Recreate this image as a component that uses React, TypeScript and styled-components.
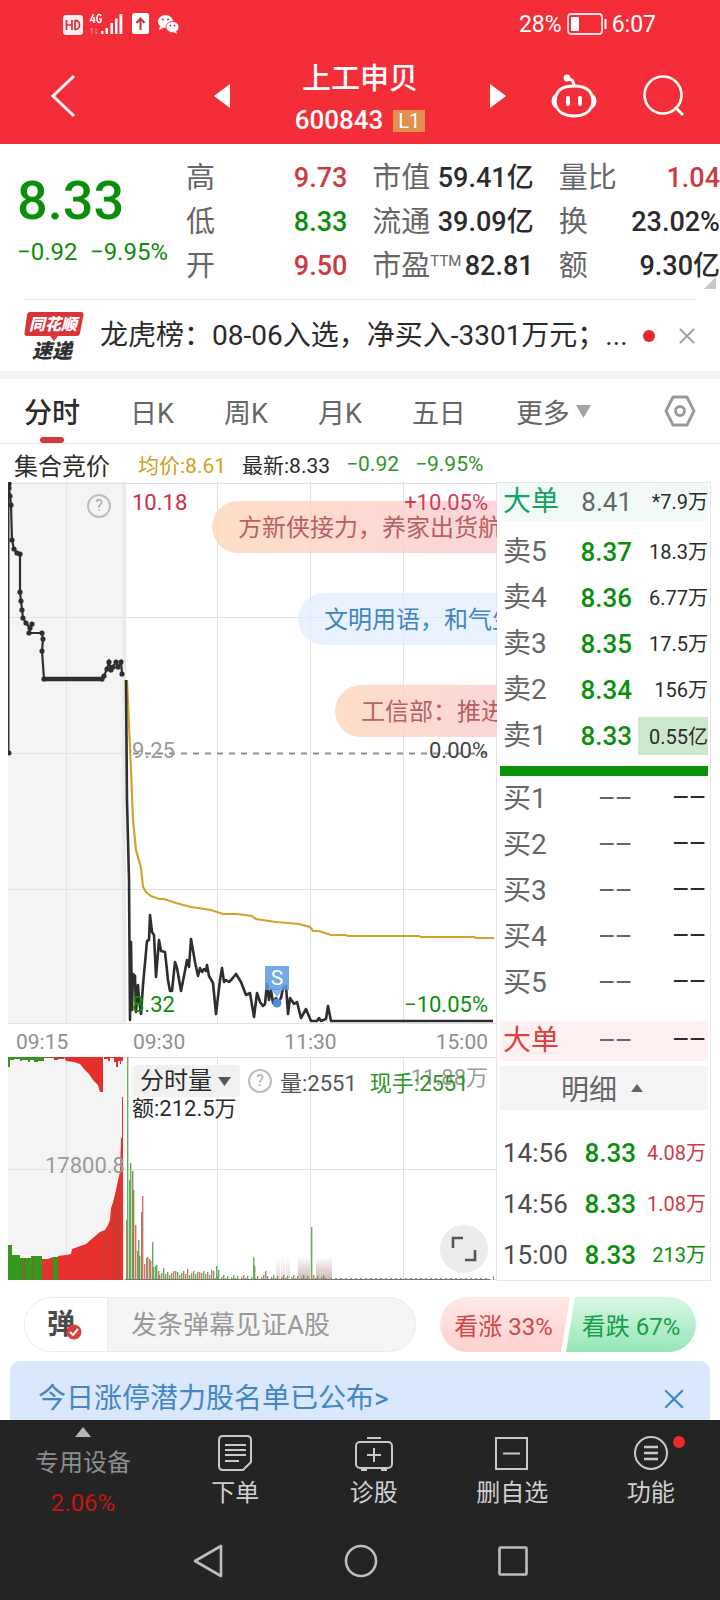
import React from 'react';
import styled, { createGlobalStyle, css } from 'styled-components';

const RED = '#cf3a3f';
const GREEN = '#0b8f0b';
const INK = '#2b2b2b';
const GREY = '#666666';
const LINE = '#e6e6e6';

const GlobalStyle = createGlobalStyle`
  * { box-sizing: border-box; }
  body {
    margin: 0;
    background: #fff;
    color: ${INK};
    font-family: Roboto, "Noto Sans CJK SC", sans-serif;
  }
  button, input {
    font: inherit;
    color: inherit;
    border: 0;
    padding: 0;
    margin: 0;
    background: none;
  }
  svg { display: block; flex: none; }
`;

/* ---------- header ---------- */

const Header = styled.header`
  background: #f32e38;
  color: #fff;
`;

const StatusBar = styled.div`
  display: flex;
  align-items: center;
  justify-content: space-between;
  height: 48px;
  padding: 0 64px 0 62px;
  font-size: 23px;
`;

const StatusGroup = styled.div<{ $gap: number }>`
  display: flex;
  align-items: center;
  gap: ${(p) => p.$gap}px;
`;

const TitleBar = styled.div`
  display: grid;
  grid-template-columns: minmax(0, 1fr) 292px minmax(0, 1fr);
  align-items: center;
  height: 96px;
`;

const TitleSide = styled.div<{ $end?: boolean }>`
  display: flex;
  align-items: center;
  gap: 46px;
  padding: ${(p) => (p.$end ? '0 35px 0 0' : '0 0 0 50px')};
  justify-content: ${(p) => (p.$end ? 'flex-end' : 'flex-start')};
`;

const TitleCenter = styled.div`
  display: flex;
  align-items: center;
  justify-content: space-between;
`;

const TitleText = styled.div`
  padding-top: 8px;
  text-align: center;
`;

const StockName = styled.h1`
  margin: 0;
  font-size: 29px;
  font-weight: 500;
  line-height: 41px;
`;

const StockCode = styled.div`
  display: flex;
  align-items: center;
  gap: 10px;
  font-size: 26px;
  font-weight: 500;
  line-height: 41px;
`;

const LevelTag = styled.span`
  width: 32px;
  height: 22px;
  background: #e2904e;
  font-size: 20px;
  font-weight: 400;
  line-height: 22px;
  text-align: center;
`;

const IconButton = styled.button`
  display: flex;
  align-items: center;
  justify-content: center;
  cursor: pointer;
`;

/* ---------- quote ---------- */

const Quote = styled.section`
  position: relative;
  display: flex;
  gap: 18px;
  padding: 12px 0 11px 17px;
`;

const PriceBlock = styled.div`
  width: 151px;
  flex: none;
  color: ${GREEN};
`;

const BigPrice = styled.div`
  font-size: 54px;
  font-weight: 500;
  line-height: 64px;
  padding-top: 13px;
`;

const Changes = styled.div`
  display: flex;
  justify-content: space-between;
  font-size: 24px;
  line-height: 38px;
  white-space: nowrap;
`;

const Stats = styled.dl`
  flex: 1;
  margin: 0;
  display: grid;
  grid-template-columns: repeat(3, 1fr);
  column-gap: 25px;
`;

const Stat = styled.div`
  display: flex;
  justify-content: space-between;
  height: 44px;
  line-height: 44px;
  white-space: nowrap;
`;

const StatName = styled.dt`
  font-size: 29px;
  color: ${GREY};
  display: flex;
`;

const Ttm = styled.small`
  font-size: 15px;
  line-height: 34px;
`;

const StatValue = styled.dd<{ $color?: string }>`
  margin: 0;
  font-size: 27px;
  font-weight: 500;
  color: ${(p) => p.$color || INK};
`;

const Corner = styled.svg`
  position: absolute;
  right: 4px;
  bottom: 10px;
`;

const News = styled.section`
  display: flex;
  align-items: center;
  height: 72px;
  margin: 0 24px;
  border-top: 1px solid ${LINE};
`;

const NewsText = styled.a`
  flex: 1;
  min-width: 0;
  margin-left: 16px;
  font-size: 28px;
  line-height: 40px;
  color: ${INK};
  text-decoration: none;
  white-space: nowrap;
`;

const NewsDot = styled.span`
  width: 12px;
  height: 12px;
  margin-right: 23px;
  border-radius: 50%;
  background: #e0292f;
`;

const Band = styled.div`
  height: 8px;
  background: #f5f5f5;
`;

/* ---------- tabs ---------- */

const Tabs = styled.nav`
  display: flex;
  align-items: center;
  gap: 50px;
  height: 65px;
  padding: 0 24px;
  border-bottom: 1px solid ${LINE};
`;

const Tab = styled.button<{ $active?: boolean }>`
  position: relative;
  display: flex;
  align-items: center;
  gap: 6px;
  height: 64px;
  font-size: 27px;
  color: ${GREY};
  white-space: nowrap;
  cursor: pointer;
  ${(p) =>
    p.$active &&
    css`
      font-size: 28px;
      font-weight: 500;
      color: ${INK};
      &::after {
        content: '';
        position: absolute;
        left: 50%;
        bottom: 0;
        width: 24px;
        height: 6px;
        margin-left: -12px;
        border-radius: 3px;
        background: ${RED};
      }
    `}
`;

const SettingsButton = styled(IconButton)`
  margin-left: auto;
`;

const Summary = styled.div`
  display: flex;
  align-items: center;
  gap: 16px;
  height: 38px;
  padding: 2px 14px 0;
  font-size: 21px;
  white-space: nowrap;
`;

const SummaryTitle = styled.span`
  margin-right: 12px;
  font-size: 24px;
`;

const Tone = styled.span<{ $color: string }>`
  color: ${(p) => p.$color};
`;

/* ---------- chart ---------- */

const Board = styled.main`
  display: grid;
  grid-template-columns: minmax(0, 1fr) 214px;
  padding: 0 9px 0 8px;
`;

const Plot = styled.div<{ $height: number }>`
  position: relative;
  height: ${(p) => p.$height}px;
  overflow: hidden;
  & > svg {
    width: 100%;
    height: 100%;
  }
`;

const PlotLabel = styled.span<{ $top: number; $left?: number; $right?: number; $color: string }>`
  position: absolute;
  top: ${(p) => p.$top}px;
  ${(p) => (p.$right !== undefined ? `right: ${p.$right}px;` : `left: ${p.$left}px;`)}
  font-size: 22px;
  line-height: 28px;
  color: ${(p) => p.$color};
  white-space: nowrap;
`;

const Bullet = styled.span<{ $top: number; $left: number; $blue?: boolean }>`
  position: absolute;
  top: ${(p) => p.$top}px;
  left: ${(p) => p.$left}px;
  right: -60px;
  height: 52px;
  padding-left: 26px;
  border-radius: 26px;
  overflow: hidden;
  font-size: 24px;
  line-height: 54px;
  white-space: nowrap;
  color: ${(p) => (p.$blue ? '#4285bf' : '#b85f60')};
  background: ${(p) =>
    p.$blue
      ? 'rgba(226, 237, 255, 0.7)'
      : 'linear-gradient(90deg, rgba(253, 214, 184, 0.8), rgba(250, 200, 216, 0.8))'};
`;

const Help = styled.button<{ $top?: number; $left?: number }>`
  ${(p) => p.$top !== undefined && `position: absolute; top: ${p.$top}px; left: ${p.$left}px;`}
  width: 24px;
  height: 24px;
  flex: none;
  border: 2px solid #bdbdbd;
  border-radius: 50%;
  font-size: 16px;
  line-height: 20px;
  color: #aaa;
  text-align: center;
`;

const SellMark = styled.span`
  position: absolute;
  left: 257px;
  top: 484px;
  width: 24px;
  height: 24px;
  background: rgba(92, 154, 224, 0.85);
  color: #fff;
  font-size: 21px;
  line-height: 24px;
  text-align: center;
`;

const TimeAxis = styled.div`
  display: grid;
  grid-template-columns: 117px 1fr 1fr 1fr;
  height: 33px;
  padding: 0 8px;
  border-right: 1px solid ${LINE};
  font-size: 21px;
  line-height: 36px;
  color: #8f8f8f;
`;

const AxisTime = styled.time<{ $align?: string }>`
  text-align: ${(p) => p.$align || 'left'};
`;

const VolumeHead = styled.div`
  position: absolute;
  left: 124px;
  top: 8px;
  display: flex;
  align-items: center;
  height: 32px;
  font-size: 22px;
  white-space: nowrap;
`;

const VolumeButton = styled.button`
  display: flex;
  align-items: center;
  gap: 6px;
  width: 108px;
  height: 32px;
  margin-right: 8px;
  padding-left: 8px;
  border-radius: 4px;
  background: #f1f1f1;
  font-size: 24px;
  line-height: 32px;
`;

const VolumeText = styled.span<{ $color: string }>`
  margin-left: 8px;
  & + & { margin-left: 13px; }
  color: ${(p) => p.$color};
`;

const Expand = styled.button`
  position: absolute;
  right: 9px;
  bottom: 7px;
  display: flex;
  align-items: center;
  justify-content: center;
  width: 48px;
  height: 48px;
  border-radius: 50%;
  background: #ececec;
`;

/* ---------- order book ---------- */

const Book = styled.aside`
  border: 1px solid ${LINE};
  border-left: 0;
  padding: 0 2px 0 3px;
`;

const BookTable = styled.table<{ $top: number }>`
  width: 100%;
  margin-top: ${(p) => p.$top}px;
  border-collapse: collapse;
  table-layout: fixed;
`;

const BookRow = styled.tr<{ $height: number; $bg?: string }>`
  height: ${(p) => p.$height}px;
  background: ${(p) => p.$bg || 'none'};
`;

const BookName = styled.th<{ $color?: string }>`
  width: 72px;
  padding: 0 0 0 3px;
  text-align: left;
  font-size: 28px;
  font-weight: 400;
  line-height: 36px;
  color: ${(p) => p.$color || GREY};
  white-space: nowrap;
`;

const BookPrice = styled.td<{ $color?: string }>`
  width: 66px;
  padding: 0 6px 0 0;
  text-align: right;
  font-size: 26px;
  font-weight: ${(p) => (p.$color ? 500 : 400)};
  line-height: 36px;
  color: ${(p) => p.$color || GREY};
`;

const BookAmount = styled.td<{ $color?: string }>`
  padding: 0;
  text-align: right;
  font-size: 20px;
  line-height: 40px;
  color: ${(p) => p.$color || INK};
  white-space: nowrap;
`;

const DashAmount = styled(BookAmount)`
  padding-right: 2px;
  line-height: 36px;
`;

const TopAmount = styled(BookAmount)`
  line-height: 36px;
`;

const Highlight = styled.span`
  display: block;
  height: 38px;
  line-height: 40px;
  background: #cde9cd;
`;

const Dashes = styled.span`
  font-family: "Liberation Mono", monospace;
  font-size: 28px;
`;

const BookBar = styled.div`
  height: 10px;
  margin-top: 7px;
  background: #069406;
`;

const DetailButton = styled.button`
  display: flex;
  align-items: center;
  justify-content: center;
  gap: 14px;
  width: 100%;
  height: 44px;
  margin-top: 5px;
  padding-right: 4px;
  background: #f5f5f5;
  font-size: 28px;
  color: ${GREY};
`;

const DealTime = styled(BookName)`
  width: 80px;
  padding-left: 3px;
  font-size: 26px;
  color: #4c4c4c;
`;

const DealPrice = styled(BookPrice)`
  width: 60px;
  padding-right: 4px;
`;

const DealAmount = styled(BookAmount)`
  padding-right: 2px;
`;

/* ---------- comment bar and banner ---------- */

const CommentBar = styled.section`
  display: flex;
  gap: 24px;
  padding: 16px 24px 9px;
`;

const CommentBox = styled.div`
  display: flex;
  flex: 1;
  min-width: 0;
  height: 55px;
  border: 1px solid #ebebeb;
  border-radius: 28px;
  overflow: hidden;
  background: #f5f5f5;
`;

const BulletToggle = styled.button`
  position: relative;
  width: 83px;
  flex: none;
  padding-right: 10px;
  border-right: 1px solid #ebebeb;
  background: #fff;
  font-size: 28px;
  font-weight: 700;
  line-height: 48px;
  color: #4a4a4a;
  svg {
    position: absolute;
    left: 41px;
    top: 26px;
  }
`;

const CommentInput = styled.input`
  flex: 1;
  min-width: 0;
  padding-left: 23px;
  font-size: 26px;
  outline: none;
  &::placeholder {
    color: #999;
    opacity: 1;
  }
`;

const Votes = styled.div`
  display: flex;
`;

const Vote = styled.button<{ $down?: boolean }>`
  width: 130px;
  height: 55px;
  font-size: 24px;
  white-space: nowrap;
  ${(p) =>
    p.$down
      ? css`
          margin-left: -4px;
          border-radius: 0 28px 28px 0;
          color: #14a049;
          background: linear-gradient(#d8f8e4, #96e6b6);
          clip-path: polygon(9px 0, 100% 0, 100% 100%, 0 100%);
        `
      : css`
          border-radius: 28px 0 0 28px;
          padding-right: 3px;
          color: #d64545;
          background: linear-gradient(#ffe9e7, #ffd0ce);
          clip-path: polygon(0 0, 100% 0, calc(100% - 9px) 100%, 0 100%);
        `}
`;

const Banner = styled.section`
  display: flex;
  align-items: center;
  justify-content: space-between;
  height: 59px;
  margin: 0 10px;
  padding: 16px 25px 0 28px;
  border-radius: 10px 10px 0 0;
  background: #d9e8fc;
`;

const BannerLink = styled.a`
  font-size: 28px;
  line-height: 44px;
  color: #4585c6;
  text-decoration: none;
`;

/* ---------- bottom bars ---------- */

const Footer = styled.footer`
  background: #242424;
`;

const ToolBar = styled.nav`
  display: flex;
  height: 101px;
`;

const IndexButton = styled.button`
  display: flex;
  flex-direction: column;
  align-items: center;
  width: 166px;
  padding-top: 7px;
  font-size: 24px;
  color: #8a8d90;
`;

const IndexName = styled.span`
  margin-top: 9px;
  line-height: 34px;
`;

const IndexChange = styled.span`
  margin-top: 6px;
  line-height: 34px;
  color: #c81414;
`;

const Tool = styled.button`
  position: relative;
  display: flex;
  flex: 1;
  flex-direction: column;
  align-items: center;
  padding-top: 14px;
  font-size: 24px;
  line-height: 34px;
  color: #d0d0d0;
  svg { margin-bottom: 4px; }
`;

const ToolDot = styled.i`
  position: absolute;
  left: 50%;
  top: 16px;
  width: 12px;
  height: 12px;
  margin-left: 22px;
  border-radius: 50%;
  background: #ee2b2b;
`;

const SystemBar = styled.nav`
  display: flex;
  align-items: center;
  justify-content: center;
  gap: 120px;
  height: 79px;
`;

/* ---------- data ---------- */

type StatItem = { name: string; value: string; color?: string; ttm?: boolean };

const stats: StatItem[] = [
  { name: '高', value: '9.73', color: RED },
  { name: '市值', value: '59.41亿' },
  { name: '量比', value: '1.04', color: RED },
  { name: '低', value: '8.33', color: GREEN },
  { name: '流通', value: '39.09亿' },
  { name: '换', value: '23.02%' },
  { name: '开', value: '9.50', color: RED },
  { name: '市盈', value: '82.81', ttm: true },
  { name: '额', value: '9.30亿' },
];

const asks = [
  ['卖5', '8.37', '18.3万'],
  ['卖4', '8.36', '6.77万'],
  ['卖3', '8.35', '17.5万'],
  ['卖2', '8.34', '156万'],
  ['卖1', '8.33', '0.55亿'],
];

const bids = ['买1', '买2', '买3', '买4', '买5'];

const deals = [
  ['14:56', '8.33', '4.08万', RED],
  ['14:56', '8.33', '1.08万', RED],
  ['15:00', '8.33', '213万', GREEN],
];

const auction: [number, number][] = [
  [9, 484], [9, 488], [10, 496], [11, 505], [12, 540], [14, 549], [17, 553], [20, 554], [20, 592],
  [21, 601], [22, 610], [23, 618], [26, 623], [30, 628], [32, 624], [29, 633], [42, 633], [43, 639],
  [42, 651], [44, 679], [102, 679], [104, 676], [107, 669], [109, 662], [111, 670], [113, 667],
  [116, 662], [118, 667], [121, 662], [122, 674],
];

const price =
  '126,680 127,800 129,880 130,1020 131,942 132,1010 133,974 135,976 136,1012 138,985 139,1000 141,1014 143,985 147,941 149,940 150,915 152,932 154,935 156,977 159,940 161,951 165,952 168,980 170,991 172,991 175,962 177,968 181,991 184,976 187,960 189,967 191,939 195,962 198,976 200,968 202,972 204,969 206,971 207,965 209,976 213,983 216,1014 220,980 222,968 224,982 226,980 229,982 232,979 236,974 241,982 246,995 250,993 254,1017 257,993 260,1002 263,1006 265,1004 267,984 269,1000 271,990 273,1003 276,998 278,1002 281,998 283,988 286,986 288,1014 290,998 294,1004 297,1002 301,1018 306,1009 311,1021 317,1021 319,1018 321,1021 326,1019 328,1006 331,1021 493,1021';

const average =
  '126,680 130,770 132,820 135,850 140,868 142,887 145,892 150,896 158,899 163,899 175,903 190,907 210,910 222,914 236,914 251,916 255,919 275,922 298,924 309,927 312,931 318,931 330,935 344,935 347,936 418,936 420,937 473,937 475,938 493,938';

const openBars: [number, number, string][] = [
  [126, 1220, 'r'], [127, 1057, 'g'], [129, 1180, 'g'], [130, 1163, 'g'], [132, 1171, 'm'],
  [133, 1190, 'm'], [135, 1225, 'r'], [137, 1251, 'g'], [138, 1240, 'g'], [139, 1256, 'm'],
  [141, 1212, 'm'], [142, 1196, 'r'], [144, 1264, 'r'], [146, 1258, 'r'], [147, 1257, 'g'],
  [149, 1259, 'r'], [150, 1261, 'r'], [152, 1242, 'g'], [153, 1267, 'g'], [155, 1266, 'g'],
  [156, 1265, 'g'], [158, 1271, 'r'], [216, 1266, 'g'], [218, 1270, 'g'], [253, 1257, 'g'],
  [254, 1266, 'g'], [265, 1271, 'r'], [311, 1227, 'g'],
];

const barColors: Record<string, string> = { r: '#d9706b', g: '#5fae5a', m: '#8f8a55' };

/* Trading volume thins out through the morning. */
const tailBars = Array.from({ length: 84 }, (_, i) => {
  const x = 159 + i * 2;
  const peak = x < 215 ? 5 : 1;
  const height = peak + ((i * 7) % 5) + (i % 6 === 2 && x < 215 ? 3 : 0);
  return { x, y: 1280 - height, color: (i * 5) % 7 < 3 ? barColors.r : barColors.g };
});

const auctionTop =
  'M64 1057 L66 1061 L74 1062 L80 1064 L84 1069 L89 1074 L93 1080 L98 1085 L100 1092 L103 1092 L103 1057Z M104 1057V1059H108V1061H110V1058H114V1062H116V1067H118V1061H120V1064H121V1061H123V1057Z';

const auctionGreen =
  'M8 1280 V1245 H12 V1255 H20 V1258 H31 V1256 H42 V1280Z M53 1280 V1257 H58 V1280Z';

const auctionRed =
  'M42 1280 V1259 L48 1259 L53 1257 V1280Z M58 1280 V1256 L66 1255 L71 1254 L72 1249 L86 1244 L94 1237 L100 1232 L105 1230 L108 1225 L110 1220 L111 1208 L113 1203 L116 1190 L119 1176 L120 1172 L121 1138 L122 1138 L122 1097 L123 1097 V1280Z';

/* ---------- drawings ---------- */

const gridColumns = [66, 217, 310, 403];

function PriceChart() {
  return (
    <svg viewBox="8 482 489 542" preserveAspectRatio="none" aria-hidden="true">
      <rect x="8" y="482" width="117" height="542" fill="#f4f4f4" />
      <rect x="122" y="482" width="4" height="542" fill="#ebebeb" />
      <g stroke="#e2e2e2" fill="none">
        {gridColumns.map((x) => (
          <path key={x} d={`M${x}.5 482V1024`} />
        ))}
        <path d="M8 483.5H497M8 617.5H497M8 889.5H497M8 753.5H126M8 1023.5H497M496.5 482V1024" />
      </g>
      <path d="M133 753.5H490" stroke="#8c8c8c" strokeWidth="2" strokeDasharray="6 6" />
      <path d="M8.5 482V753" stroke="#333" strokeWidth="2" />
      <circle cx="9" cy="753" r="2.5" fill="#2b2b2b" />
      <polyline points={auction.map((p) => p.join(',')).join(' ')} fill="none" stroke="#2e2e2e" strokeWidth="2.2" />
      {auction.map(([x, y], i) => (
        <circle key={i} cx={x} cy={y} r="2.6" fill="#2e2e2e" />
      ))}
      <path d="M43 679H103" stroke="#2e2e2e" strokeWidth="4.5" />
      <polyline points={average} transform="translate(1 0)" fill="none" stroke="#d3a12c" strokeWidth="2.2" />
      <polyline points={price} fill="none" stroke="#2e2e2e" strokeWidth="2.6" strokeLinejoin="round" />
      <path d="M271 989h12l-6 8z" fill="#8ab6ea" />
      <circle cx="277" cy="1003" r="4.5" fill="#4c8fdc" />
    </svg>
  );
}

function VolumeChart() {
  return (
    <svg viewBox="8 1057 489 223" preserveAspectRatio="none" aria-hidden="true">
      <defs>
        <linearGradient id="smear" x1="0" x2="0" y1="0" y2="1">
          <stop offset="0" stopColor="#a07f78" stopOpacity="0" />
          <stop offset="1" stopColor="#a07f78" stopOpacity="0.75" />
        </linearGradient>
      </defs>
      <rect x="8" y="1057" width="117" height="223" fill="#f4f4f4" />
      <g stroke="#e2e2e2" fill="none">
        {gridColumns.map((x) => (
          <path key={x} d={`M${x}.5 1057V1280`} />
        ))}
        <path d="M8 1057.5H497M8 1169.5H497M496.5 1057V1280M8 1279.5H497" />
      </g>
      <path d="M8 1057H44V1061H38V1062H34V1060H30V1062H28V1060H22V1061H20V1059H14V1060H10V1067H8Z" fill="#35941f" />
      <path d="M44 1057H64V1059H58V1060H54V1058H44Z" fill="#a9442f" />
      <path d={auctionTop} fill="#e52f2f" />
      <path d={auctionGreen} fill="#35981f" />
      <path d={auctionRed} fill="#e8302f" />
      <path d="M22.5 1280V1259M24.5 1280V1259M32.5 1280V1257M47.5 1280V1260M104.5 1280V1231" stroke="#a0562a" />
      <path d="M112 1280V1206L116 1192L120 1174V1280Z" fill="#c33e2c" opacity="0.6" />
      {openBars.map(([x, y, c], i) => (
        <rect key={i} x={x} y={y} width="1.4" height={1280 - y} fill={barColors[c]} />
      ))}
      {tailBars.map((b) => (
        <rect key={b.x} x={b.x} y={b.y} width="1.4" height={1280 - b.y} fill={b.color} />
      ))}
      {[276, 281, 286, 298, 302, 306, 316, 320, 324, 328].map((x) => (
        <rect key={x} x={x} y="1256" width="4" height="23" fill="url(#smear)" opacity={x > 290 ? 0.7 : 0.35} />
      ))}
      <path d="M125 1279.5H490" stroke="#6f7a6f" />
      <path d="M330 1278.5H488" stroke="#999" strokeDasharray="2 3" />
      <path d="M493.5 1276V1280" stroke="#888" />
    </svg>
  );
}

const Caret = ({ up, color, w = 14, h = 12 }: { up?: boolean; color: string; w?: number; h?: number }) => (
  <svg width={w} height={h} viewBox="0 0 14 12" preserveAspectRatio="none" aria-hidden="true">
    <path d={up ? 'M7 0L14 12H0Z' : 'M0 0H14L7 12Z'} fill={color} />
  </svg>
);

const Cross = ({ size, color }: { size: number; color: string }) => (
  <svg width={size} height={size} viewBox="0 0 20 20" fill="none" stroke={color} strokeWidth="2" aria-hidden="true">
    <path d="M2 2L18 18M18 2L2 18" />
  </svg>
);

const StatusIcons = () => (
  <svg width="118" height="24" viewBox="62 12 118 24" fill="#fff" aria-hidden="true">
    <rect x="63" y="15" width="20" height="20" rx="3" opacity="0.92" />
    <path d="M66.500 20v10M72 20v10M66.500 25H72M75 20.700v8.600c6 1 6-9.600 0-8.600Z" stroke="#d9303a" strokeWidth="1.700" fill="none" />
    <path d="M93.500 14l-3 6.500h5M94 17v6M101 16c-1-2.500-4-2-4 2.500s3 5 4 2.500v-2h-2" stroke="#fff" strokeWidth="1.500" fill="none" />
    <path d="M92 34v-6l-1.500 2M96 28v6l1.500-2" stroke="#fff" opacity="0.4" fill="none" />
    <path d="M101 31h2.500v3H101ZM105.500 28H108v6h-2.500ZM110.500 23H113v11h-2.500ZM115 18.500h2.500V34H115ZM119.500 14h2.800v20h-2.800Z" />
    <rect x="132" y="13" width="17" height="21" rx="2.500" />
    <path d="M140.500 30V19M136.500 23l4-4.500 4 4.500" stroke="#c9303a" strokeWidth="2" fill="none" />
    <ellipse cx="165.500" cy="21.500" rx="7.600" ry="6.500" />
    <path d="M160 26l-1 4 4-2Z" />
    <ellipse cx="172.500" cy="27" rx="6.500" ry="5.500" stroke="#f32e38" strokeWidth="0.800" />
    <path d="M176 31l1 3-4-2Z" />
    <g fill="#a3303a">
      <circle cx="163" cy="19.500" r="1" />
      <circle cx="168" cy="19.500" r="1" />
      <circle cx="170.500" cy="25.500" r="0.900" />
      <circle cx="174.500" cy="25.500" r="0.900" />
    </g>
  </svg>
);

const NewsLogo = () => (
  <svg width="60" height="54" viewBox="0 0 60 54" role="img" aria-label="同花顺速递">
    <path d="M6 3H57q3 0 2.500 3L56 24q-.5 3-3.500 3H34l-4 5-4-5H3q-3 0-2.500-3L3 6q.5-3 3-3Z" fill="#d9343a" />
    <text x="29" y="21" fontSize="16" fontWeight="900" fontStyle="italic" fill="#fff" textAnchor="middle">
      同花顺
    </text>
    <text x="28" y="49" fontSize="20" fontWeight="900" fontStyle="italic" fill="#2f2f2f" textAnchor="middle">
      速递
    </text>
  </svg>
);

const toolIcon = {
  fill: 'none',
  stroke: '#c9c9c9',
  strokeWidth: 2,
  width: 40,
  height: 38,
  viewBox: '0 0 40 38',
  'aria-hidden': true,
} as const;

const BookDashRow = ({ name, height, bg, color }: { name: string; height: number; bg?: string; color?: string }) => (
  <BookRow $height={height} $bg={bg}>
    <BookName scope="row" $color={color}>{name}</BookName>
    <BookPrice><Dashes>−−</Dashes></BookPrice>
    <DashAmount><Dashes>−−</Dashes></DashAmount>
  </BookRow>
);

export default function App() {
  return (
    <>
      <GlobalStyle />
      <Header>
        <StatusBar>
          <StatusIcons />
          <StatusGroup $gap={5}>
            <span>28%</span>
            <svg width="40" height="22" viewBox="0 0 40 22" aria-hidden="true">
              <rect x="1" y="1" width="34" height="20" rx="3" fill="none" stroke="#fff" strokeWidth="1.800" opacity="0.85" />
              <rect x="4" y="4" width="8" height="14" rx="1" fill="#fff" />
              <rect x="37.500" y="6" width="2" height="10" fill="#fff" />
            </svg>
            <span>6:07</span>
          </StatusGroup>
        </StatusBar>
        <TitleBar>
          <TitleSide>
            <IconButton aria-label="返回">
              <svg width="26" height="44" viewBox="0 0 26 44" fill="none" stroke="#fff" strokeWidth="3">
                <path d="M24 2L3 22L24 42" />
              </svg>
            </IconButton>
          </TitleSide>
          <TitleCenter>
            <IconButton aria-label="上一只">
              <svg width="16" height="24" viewBox="0 0 16 24"><path d="M16 0V24L0 12Z" fill="#fff" /></svg>
            </IconButton>
            <TitleText>
              <StockName>上工申贝</StockName>
              <StockCode>600843 <LevelTag>L1</LevelTag></StockCode>
            </TitleText>
            <IconButton aria-label="下一只">
              <svg width="16" height="24" viewBox="0 0 16 24"><path d="M0 0V24L16 12Z" fill="#fff" /></svg>
            </IconButton>
          </TitleCenter>
          <TitleSide $end>
            <IconButton aria-label="智能助手">
              <svg width="46" height="44" viewBox="0 0 46 44" fill="none" stroke="#fff" strokeWidth="2.800" strokeLinecap="round">
                <path d="M23 12c9 0 16 3 18 10 1 3 1 7 0 10-3 7-9 10-18 10S8 39 5 32c-1-3-1-7 0-10 2-7 9-10 18-10Z" />
                <path d="M5 21c-4 3-4 9 0 12M41 21c4 3 4 9 0 12" />
                <path d="M23 12c0-5-2-7-6-7" />
                <circle cx="16" cy="4" r="2" fill="#fff" />
                <path d="M17 24v6M29 24v6" strokeWidth="4" />
              </svg>
            </IconButton>
            <IconButton aria-label="搜索">
              <svg width="42" height="42" viewBox="0 0 42 42" fill="none" stroke="#fff" strokeWidth="2.600">
                <circle cx="20" cy="20" r="18.500" />
                <path d="M32 32L40 40" strokeWidth="3" />
              </svg>
            </IconButton>
          </TitleSide>
        </TitleBar>
      </Header>

      <Quote>
        <PriceBlock>
          <BigPrice>8.33</BigPrice>
          <Changes><span>−0.92</span><span>−9.95%</span></Changes>
        </PriceBlock>
        <Stats>
          {stats.map((s) => (
            <Stat key={s.name}>
              <StatName>{s.name}{s.ttm && <Ttm>TTM</Ttm>}</StatName>
              <StatValue $color={s.color}>{s.value}</StatValue>
            </Stat>
          ))}
        </Stats>
        <Corner width="12" height="12" viewBox="0 0 12 12"><path d="M12 0V12H0Z" fill="#c9c9c9" /></Corner>
      </Quote>

      <News>
        <NewsLogo />
        <NewsText href="#news">龙虎榜：08-06入选，净买入-3301万元；...</NewsText>
        <NewsDot />
        <IconButton aria-label="关闭"><Cross size={18} color="#999" /></IconButton>
      </News>
      <Band />

      <Tabs>
        <Tab $active>分时</Tab>
        <Tab>日K</Tab>
        <Tab>周K</Tab>
        <Tab>月K</Tab>
        <Tab>五日</Tab>
        <Tab>更多<Caret color="#a3a3a3" w={15} h={13} /></Tab>
        <SettingsButton aria-label="设置">
          <svg width="32" height="32" viewBox="0 0 32 32" fill="none" stroke="#999" strokeWidth="2.800" strokeLinejoin="round">
            <path d="M9 2H23L30 16L23 30H9L2 16Z" />
            <circle cx="16" cy="16" r="4.500" />
          </svg>
        </SettingsButton>
      </Tabs>
      <Summary>
        <SummaryTitle>集合竞价</SummaryTitle>
        <Tone $color="#d29f22">均价:8.61</Tone>
        <Tone $color={INK}>最新:8.33</Tone>
        <Tone $color="#2f9626">−0.92</Tone>
        <Tone $color="#2f9626">−9.95%</Tone>
      </Summary>

      <Board>
        <div>
          <Plot $height={542}>
            <PriceChart />
            <Help $top={12} $left={79} aria-label="集合竞价说明">?</Help>
            <Bullet $top={19} $left={204}>方新侠接力，养家出货航</Bullet>
            <Bullet $top={111} $left={290} $blue>文明用语，和气生</Bullet>
            <Bullet $top={203} $left={327}>工信部：推进</Bullet>
            <PlotLabel $top={7} $left={124} $color="#c9303c">10.18</PlotLabel>
            <PlotLabel $top={7} $right={9} $color="#d0405c">+10.05%</PlotLabel>
            <PlotLabel $top={255} $left={124} $color="#999">9.25</PlotLabel>
            <PlotLabel $top={255} $right={9} $color="#444">0.00%</PlotLabel>
            <PlotLabel $top={509} $left={124} $color={GREEN}>8.32</PlotLabel>
            <PlotLabel $top={509} $right={9} $color={GREEN}>−10.05%</PlotLabel>
            <SellMark>S</SellMark>
          </Plot>
          <TimeAxis>
            <AxisTime>09:15</AxisTime>
            <AxisTime>09:30</AxisTime>
            <AxisTime $align="center">11:30</AxisTime>
            <AxisTime $align="right">15:00</AxisTime>
          </TimeAxis>
          <Plot $height={223}>
            <VolumeChart />
            <PlotLabel $top={95} $right={372} $color="#999">17800.8</PlotLabel>
            <PlotLabel $top={7} $right={9} $color="#999">11.88万</PlotLabel>
            <VolumeHead>
              <VolumeButton>分时量<Caret color="#555" w={13} h={9} /></VolumeButton>
              <Help aria-label="分时量说明">?</Help>
              <VolumeText $color="#555">量:2551</VolumeText>
              <VolumeText $color="#2f9626">现手:2551</VolumeText>
            </VolumeHead>
            <PlotLabel $top={38} $left={124} $color={INK}>额:212.5万</PlotLabel>
            <Expand aria-label="全屏">
              <svg width="26" height="26" viewBox="0 0 26 26" fill="none" stroke="#555" strokeWidth="2.600">
                <path d="M2 12V2H12M24 14V24H14" />
              </svg>
            </Expand>
          </Plot>
        </div>

        <Book>
          <BookTable $top={0}>
            <tbody>
              <BookRow $height={38} $bg="#f1faf5">
                <BookName scope="row" $color="#16a264">大单</BookName>
                <BookPrice>8.41</BookPrice>
                <TopAmount>*7.9万</TopAmount>
              </BookRow>
            </tbody>
          </BookTable>
          <BookTable $top={8}>
            <tbody>
              {asks.map(([name, value, amount]) => (
                <BookRow key={name} $height={46}>
                  <BookName scope="row">{name}</BookName>
                  <BookPrice $color={GREEN}>{value}</BookPrice>
                  <BookAmount>{name === '卖1' ? <Highlight>{amount}</Highlight> : amount}</BookAmount>
                </BookRow>
              ))}
            </tbody>
          </BookTable>
          <BookBar />
          <BookTable $top={0}>
            <tbody>
              {bids.map((name) => (
                <BookDashRow key={name} name={name} height={46} />
              ))}
            </tbody>
          </BookTable>
          <BookTable $top={15}>
            <tbody>
              <BookDashRow name="大单" height={40} bg="#fff1f0" color="#dc4040" />
            </tbody>
          </BookTable>
          <DetailButton>明细<Caret up color="#666" w={12} h={8} /></DetailButton>
          <BookTable $top={17}>
            <tbody>
              {deals.map(([time, value, amount, color], i) => (
                <BookRow key={i} $height={51}>
                  <DealTime scope="row">{time}</DealTime>
                  <DealPrice $color={GREEN}>{value}</DealPrice>
                  <DealAmount $color={color}>{amount}</DealAmount>
                </BookRow>
              ))}
            </tbody>
          </BookTable>
        </Book>
      </Board>

      <CommentBar>
        <CommentBox>
          <BulletToggle aria-label="弹幕开关">
            弹
            <svg width="16" height="16" viewBox="0 0 16 16">
              <circle cx="8" cy="8" r="7.500" fill="#d8403c" />
              <path d="M4 8L7 11L12 5" fill="none" stroke="#fff" strokeWidth="2" />
            </svg>
          </BulletToggle>
          <CommentInput aria-label="弹幕内容" placeholder="发条弹幕见证A股" />
        </CommentBox>
        <Votes>
          <Vote>看涨 33%</Vote>
          <Vote $down>看跌 67%</Vote>
        </Votes>
      </CommentBar>
      <Banner>
        <BannerLink href="#list">今日涨停潜力股名单已公布&gt;</BannerLink>
        <IconButton aria-label="关闭横幅"><Cross size={22} color="#4585c6" /></IconButton>
      </Banner>

      <Footer>
        <ToolBar>
          <IndexButton>
            <Caret up color="#b5b5b5" w={16} h={10} />
            <IndexName>专用设备</IndexName>
            <IndexChange>2.06%</IndexChange>
          </IndexButton>
          <Tool>
            <svg {...toolIcon}>
              <path d="M8 2H32q4 0 4 4V28L28 36H8q-4 0-4-4V6q0-4 4-4Z" />
              <path d="M10 11H31M10 16H31M10 21H31M10 27H24" />
            </svg>
            下单
          </Tool>
          <Tool>
            <svg {...toolIcon}>
              <rect x="2" y="8" width="36" height="26" rx="4" />
              <path d="M13 4H27M20 14V28M13 21H27M7 36H13M27 36H33" />
            </svg>
            诊股
          </Tool>
          <Tool>
            <svg {...toolIcon}>
              <rect x="4" y="4" width="31" height="31" />
              <path d="M11 19.500H28" />
            </svg>
            删自选
          </Tool>
          <Tool>
            <svg {...toolIcon}>
              <circle cx="20" cy="19" r="16" />
              <path d="M13 13H27M13 19H27M13 25H27" strokeWidth="2.600" />
            </svg>
            功能
            <ToolDot />
          </Tool>
        </ToolBar>
        <SystemBar>
          <IconButton aria-label="系统返回">
            <svg width="32" height="34" viewBox="0 0 32 34" fill="none" stroke="#bdbdbd" strokeWidth="2.600" strokeLinejoin="round">
              <path d="M29 2V32L3 17Z" />
            </svg>
          </IconButton>
          <IconButton aria-label="主屏幕">
            <svg width="34" height="34" viewBox="0 0 34 34" fill="none" stroke="#bdbdbd" strokeWidth="2.600">
              <circle cx="17" cy="17" r="15" />
            </svg>
          </IconButton>
          <IconButton aria-label="最近任务">
            <svg width="30" height="30" viewBox="0 0 30 30" fill="none" stroke="#bdbdbd" strokeWidth="2.600">
              <rect x="1.500" y="1.500" width="27" height="27" rx="1" />
            </svg>
          </IconButton>
        </SystemBar>
      </Footer>
    </>
  );
}
